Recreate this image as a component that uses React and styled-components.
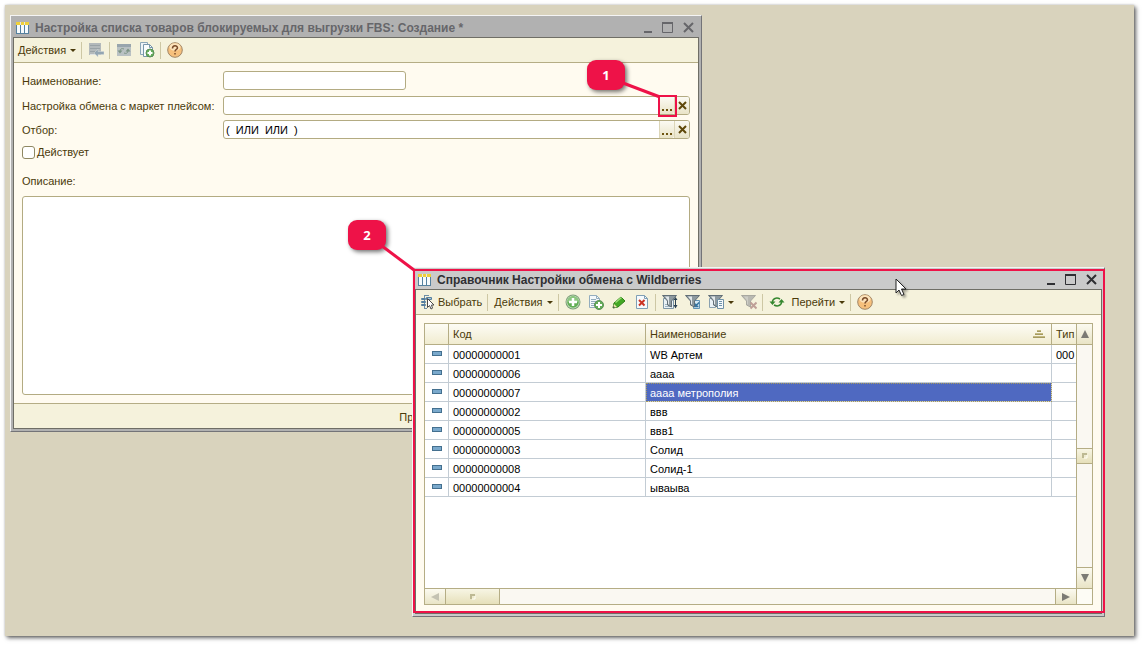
import React, { useState } from "react";
import styled, { createGlobalStyle, css } from "styled-components";

const GlobalStyle = createGlobalStyle`
  * {
    box-sizing: border-box;
  }
  body {
    margin: 0;
    background: #ffffff;
    font-family: "Liberation Sans", Arial, sans-serif;
    font-size: 11px;
    line-height: 14px;
    color: #4a3a0a;
  }
  button, input, textarea {
    font: inherit;
    color: inherit;
  }
`;

const Page = styled.div`
  min-height: 100vh;
  padding: 5px 9px 9px 5px;
  display: flex;
`;

const Desktop = styled.main`
  position: relative;
  flex: 1;
  min-width: 900px;
  min-height: 620px;
  background: #d9d3bd;
  box-shadow: 2px 2px 4px rgba(0, 0, 0, 0.6), 0 0 2px rgba(0, 0, 0, 0.2);
`;

const Window = styled.section`
  position: absolute;
  display: flex;
  flex-direction: column;
  padding: 0 2px 2px;
  border: 1px solid #747478;
  border-top-color: #f4f4f4;
  border-left-color: #f4f4f4;
  background: ${({ $active }) => ($active ? "#cacaca" : "#b1b1b1")};
`;

const FormWindow = styled(Window)`
  top: 10px;
  left: 5px;
  right: 432px;
`;

const ListWindow = styled(Window)`
  top: 262px;
  left: 407px;
  right: 29px;
`;

const TitleBar = styled.header`
  display: flex;
  align-items: center;
  height: 21px;
  padding: 2px 0 0 3px;
  color: ${({ $active }) => ($active ? "#2f2f33" : "#66666a")};
`;

const Title = styled.h1`
  flex: 1;
  margin: 0 0 0 6px;
  font-size: 12px;
  font-weight: 700;
  line-height: 14px;
  white-space: nowrap;
`;

const CaptionButton = styled.button`
  display: flex;
  align-items: center;
  justify-content: center;
  width: 21px;
  height: 16px;
  padding: 0;
  border: 0;
  background: none;
`;

const Client = styled.div`
  display: flex;
  flex-direction: column;
  border: 1px solid #6f6e66;
  background: #fffbf0;
`;

const Toolbar = styled.div`
  display: flex;
  align-items: center;
  gap: 1px;
  height: 25px;
  padding: 0 1px;
  border-bottom: 1px solid #b5ad85;
  background: #f5f2dc;
`;

const ToolButton = styled.button`
  display: flex;
  align-items: center;
  justify-content: center;
  gap: 2px;
  height: 22px;
  min-width: 22px;
  padding: 0 3px;
  border: 0;
  background: none;
  white-space: nowrap;
`;

const Separator = styled.span`
  width: 1px;
  height: 17px;
  margin: 0 2px 0 1px;
  background: #cdc7a4;
`;

const Caret = styled.span`
  margin-left: 2px;
  border: 3px solid transparent;
  border-top-color: #4a3a0a;
  border-bottom: 0;
`;

const Form = styled.form`
  display: flex;
  flex-direction: column;
  padding: 8px;
`;

const FieldRow = styled.div`
  display: grid;
  grid-template-columns: 201px 1fr;
  align-items: center;
  margin-bottom: ${({ $gap }) => $gap || 6}px;
`;

const fieldFrame = css`
  border: 1px solid #b3ab82;
  border-radius: 3px;
  background: #ffffff;
`;

const TextField = styled.input`
  ${fieldFrame}
  width: 183px;
  height: 19px;
  padding: 0 3px;
  color: #000000;
`;

const PickField = styled.div`
  ${fieldFrame}
  display: flex;
  height: 19px;
`;

const PickInput = styled.input`
  flex: 1;
  min-width: 0;
  padding: 0 2px;
  border: 0;
  background: none;
  color: #000000;
  white-space: pre;
`;

const PickButton = styled.button`
  position: relative;
  display: flex;
  align-items: center;
  justify-content: center;
  width: 15px;
  padding: 0;
  border: 0;
  border-left: 1px solid #dcd6b8;
  border-radius: 0 2px 2px 0;
  background: linear-gradient(#fbfaf2, #e9e4c8);
  z-index: ${({ $raised }) => ($raised ? 1 : 0)};
`;

const CheckRow = styled.label`
  display: flex;
  align-items: center;
  gap: 2px;
  height: 14px;
  margin-bottom: 15px;
`;

const CheckBox = styled.input`
  appearance: none;
  ${fieldFrame}
  border-color: #8f8862;
  width: 13px;
  height: 13px;
  margin: 0;
  &:checked {
    background: #8f8862;
  }
`;

const Description = styled.textarea`
  ${fieldFrame}
  display: block;
  width: 100%;
  height: 199px;
  margin-top: 8px;
  padding: 3px;
  resize: none;
`;

const Footer = styled.footer`
  display: flex;
  align-items: flex-end;
  justify-content: flex-end;
  height: 25px;
  padding-right: 247px;
  border-top: 1px solid #b5ad85;
  background: #f5f2dc;
`;

const ListBody = styled.div`
  padding: 8px;
`;

const ListFrame = styled.div`
  display: grid;
  grid-template-columns: 1fr 16px;
  grid-template-rows: minmax(264px, auto) 16px;
  border: 1px solid #b5ad85;
  background: #ffffff;
`;

const Table = styled.table`
  width: 100%;
  table-layout: fixed;
  border-collapse: separate;
  border-spacing: 0;
`;

const Col = styled.col`
  width: ${({ $width }) => ($width ? `${$width}px` : "auto")};
`;

const HeadCell = styled.th`
  height: 21px;
  padding: 0 4px;
  border-right: 1px solid #b5ad85;
  border-bottom: 1px solid #b5ad85;
  background: linear-gradient(#fdfcf5, #f1ecd0);
  font-weight: 400;
  text-align: left;
  white-space: nowrap;
  overflow: hidden;
  &:last-child {
    border-right: 0;
  }
`;

const HeadContent = styled.div`
  display: flex;
  align-items: center;
  justify-content: space-between;
  padding-right: 2px;
`;

const Cell = styled.td`
  height: 19px;
  padding: 1px 4px 0;
  border-right: 1px solid #c3ccd4;
  border-bottom: 1px solid #c3ccd4;
  color: #000000;
  white-space: nowrap;
  overflow: hidden;
  &:last-child {
    border-right: 0;
  }
  ${({ $selected }) =>
    $selected &&
    css`
      background: #4f69c1;
      color: #ffffff;
      outline: 1px dotted #a89a5c;
      outline-offset: -1px;
    `}
`;

const ItemMark = styled.span`
  display: block;
  width: 10px;
  height: 5px;
  margin: 0 0 2px 3px;
  border: 1px solid #44708f;
  background: #7aa9cc;
`;

const VerticalScroll = styled.div`
  display: flex;
  flex-direction: column;
  border-left: 1px solid #b5ad85;
  background: #faf8f2;
`;

const HorizontalScroll = styled.div`
  display: flex;
  border-top: 1px solid #b5ad85;
  background: #faf8f2;
`;

const ScrollCorner = styled.div`
  border-top: 1px solid #b5ad85;
  border-left: 1px solid #b5ad85;
  background: #fdfcf5;
`;

const ScrollButton = styled.button`
  display: flex;
  align-items: center;
  justify-content: center;
  flex: none;
  padding: 0;
  border: 0 solid #b5ad85;
  background: linear-gradient(#fbfaf0, #e9e4c6);
  ${({ $side }) => $side === "up" && "height: 21px; border-bottom-width: 1px;"}
  ${({ $side }) => $side === "down" && "height: 21px; border-top-width: 1px;"}
  ${({ $side }) => $side === "left" && "width: 21px; border-right-width: 1px;"}
  ${({ $side }) => $side === "right" && "width: 21px; border-left-width: 1px;"}
`;

const Track = styled.div`
  display: flex;
  flex: 1;
  flex-direction: ${({ $vertical }) => ($vertical ? "column" : "row")};
`;

const TrackSpace = styled.div`
  flex: ${({ $grow }) => $grow};
`;

const Thumb = styled.div`
  display: flex;
  align-items: center;
  justify-content: center;
  border: 0 solid #b5ad85;
  background: linear-gradient(#f7f5e4, #e6e0ba);
  ${({ $vertical }) =>
    $vertical
      ? "height: 16px; border-width: 1px 0;"
      : "width: 54px; border-right-width: 1px;"}
`;

const Highlight = styled.span`
  position: absolute;
  inset: 1px -1px 3px 0;
  border: 2px solid #ee1248;
  pointer-events: none;
`;

const ButtonHighlight = styled(Highlight)`
  inset: -2px -3px -3px -2px;
`;

const Callout = styled.span`
  position: absolute;
  z-index: 2;
  display: flex;
  align-items: center;
  justify-content: center;
  width: 38px;
  height: 30px;
  border-radius: 9px;
  background: #ee1248;
  box-shadow: 2px 2px 4px rgba(0, 0, 0, 0.55);
  color: #ffffff;
  font: 700 13px/16px "Open Sans", "Noto Sans", sans-serif;
`;

const FirstCallout = styled(Callout)`
  top: -37px;
  left: -73px;
`;

const SecondCallout = styled(Callout)`
  top: -48px;
  left: -65px;
`;

const Leader = styled.svg`
  position: absolute;
  overflow: visible;
  z-index: 3;
  pointer-events: none;
`;

const FirstLeader = styled(Leader)`
  top: -14px;
  left: -37px;
`;

const SecondLeader = styled(Leader)`
  top: -22px;
  left: -31px;
`;

const Pointer = styled.svg`
  position: absolute;
  top: 10px;
  right: 196px;
  filter: drop-shadow(2px 2px 1px rgba(0, 0, 0, 0.35));
`;

const Icon = ({ children, width = 16, height = 16 }) => (
  <svg width={width} height={height} viewBox={`0 0 ${width} ${height}`} fill="none" aria-hidden="true">
    {children}
  </svg>
);

const TableIcon = () => (
  <Icon width={13} height={12}>
    <path d="M0 2h13v10H0z" fill="#55819f" />
    <path d="M1 3h3v8H1zM5 3h3v8H5zM9 3h3v8H9z" fill="#f7fbfd" />
    <path d="M0 0h4v3H0zM5 0h3v3H5zM9 0h4v3H9z" fill="#efd03a" />
    <path d="M4 0h1v3H4zM8 0h1v3H8z" fill="#e8e8e0" />
  </Icon>
);

const SaveIcon = () => (
  <Icon>
    <path d="M1 1h12v12H1z" fill="#b3b9bb" />
    <path d="M2 3.500h10M2 6.500h10M2 9.500h5" stroke="#9aa3a7" />
    <path d="M2 12.500h6" stroke="#dfe3e2" />
    <path d="M6 11l4-4v2.500h6v3h-6V15z" fill="#93a5b2" stroke="#d5dad9" strokeWidth=".5" />
  </Icon>
);

const RereadIcon = () => (
  <Icon>
    <path d="M1 2h14v12H1z" fill="#b9c1c3" />
    <path d="M1 2h14v3H1z" fill="#98a5ad" />
    <path d="M4 9c0-2 2-3 4-2M12 9c0 2-2 3-4 2" stroke="#7c9484" />
    <path d="M1.500 8.500h5L4 11.500zM9.500 9.500h5L12 6.500z" fill="#7c9484" />
  </Icon>
);

const PlusBadge = ({ x, y, r }) => (
  <g>
    <circle cx={x} cy={y} r={r} fill="#64ad58" stroke="#5a8f58" />
    <path d={`M${x - r + 1.5} ${y}h${2 * r - 3}M${x} ${y - r + 1.5}v${2 * r - 3}`} stroke="#fff" strokeWidth="2" />
  </g>
);

const CopyDocsIcon = () => (
  <Icon>
    <path d="M1.500.500h7v12h-7z" fill="#eef4f7" stroke="#8ba6b7" />
    <path d="M4.500 2.500h6l3 3v9h-9z" fill="#f8fbfc" stroke="#7896aa" />
    <path d="M10.500 2.500v3h3" stroke="#7896aa" />
    <PlusBadge x={11} y={11} r={4} />
  </Icon>
);

const AddIcon = () => (
  <Icon>
    <circle cx="8" cy="8" r="7.500" fill="#7d9f79" />
    <circle cx="8" cy="8" r="6.500" fill="#cde5c6" />
    <circle cx="8" cy="8" r="5.800" fill="#62ae55" />
    <path d="M2.200 8a5.800 5.800 0 0 1 11.600 0z" fill="#8dc781" />
    <path d="M4 8h8M8 4v8" stroke="#fff" strokeWidth="2.500" />
  </Icon>
);

const AddCopyIcon = () => (
  <Icon>
    <path d="M1.500 1.500h7l3 3v9h-10z" fill="#f4f9fb" stroke="#93adbe" />
    <path d="M8.500 1.500v3h3M3 5.500h5M3 7.500h5M3 9.500h4M3 11.500h3" stroke="#93adbe" />
    <PlusBadge x={11} y={11} r={4.5} />
  </Icon>
);

const EditIcon = () => (
  <Icon>
    <path d="M2 14l1-5 7-6 4 4-7 6z" fill="#43a824" stroke="#2f8019" />
    <path d="M4.500 8.500l6-5" stroke="#9bdc78" strokeWidth="1.500" />
    <path d="M2 14l1-4 3 3z" fill="#f3e6b4" />
    <path d="M2 14l.500-2 1.500 1.500z" fill="#333" />
  </Icon>
);

const DeleteIcon = () => (
  <Icon>
    <path d="M2.500 1.500h8l3 3v10h-11z" fill="#f6fafc" stroke="#7f9fb5" />
    <path d="M10.500 1.500v3h3" stroke="#7f9fb5" />
    <path d="M5 6l5.500 5.500M10.500 6L5 11.500" stroke="#cc3322" strokeWidth="2" />
  </Icon>
);

const Funnel = ({ muted }) => (
  <g>
    <path
      d="M.500 1.500h14L9.500 7v6l-4-2V7z"
      fill={muted ? "#b9b9b2" : "#8d999f"}
      stroke={muted ? "#a8a8a0" : "#626f77"}
    />
    <path d="M3 2.500h4v8L6 10V6.500z" fill={muted ? "#cdcdc6" : "#e3e9ec"} />
  </g>
);

const FilterSortIcon = () => (
  <Icon>
    <path d="M1.500 4.500h10v10h-10z" fill="#eaf2f6" stroke="#7f97a6" />
    <path d="M3 12.500h7M3 10.500h3" stroke="#9db3c1" />
    <Funnel />
    <path d="M13.500 4v9" stroke="#2c4254" />
    <path d="M11.500 6l2-3 2 3zM11.500 11l2 3.500 2-3.500z" fill="#2c4254" />
  </Icon>
);

const FilterValueIcon = () => (
  <Icon>
    <path d="M8.500 6.500h6v8h-6z" fill="#d6eaf6" stroke="#5f93b6" />
    <Funnel />
    <path d="M10.500 12.500l3.500-4M10.500 9.500v3h3" stroke="#3674a0" strokeWidth="1.500" />
  </Icon>
);

const FilterListIcon = () => (
  <Icon>
    <path d="M1.500 4.500h6v9h-6z" fill="#eaf2f6" stroke="#8aa1b0" />
    <Funnel />
    <path d="M9.500 5.500h6v9h-6z" fill="#f5f9fb" stroke="#6f90a6" />
    <path d="M11 7.500h3M11 9.500h3M11 11.500h3" stroke="#6f93ab" />
  </Icon>
);

const FilterOffIcon = () => (
  <Icon>
    <Funnel muted />
    <path d="M9.500 8.500l6 6M15.500 8.500l-6 6" stroke="#bf9f97" strokeWidth="2" />
  </Icon>
);

const RefreshIcon = () => (
  <Icon>
    <path d="M3.500 8c0-3.500 4-5 7.500-3M12.500 8c0 3.500-4 5-7.500 3" stroke="#35872f" strokeWidth="1.500" />
    <path d="M.500 7.500h6l-3 3.500zM9.500 8.500h6l-3-3.500z" fill="#35872f" />
  </Icon>
);

const HelpIcon = () => (
  <Icon>
    <circle cx="8" cy="8" r="7.300" fill="#f6c07c" stroke="#a08565" />
    <ellipse cx="8" cy="5" rx="5.500" ry="3.800" fill="#fce3bb" />
    <path d="M5.500 6.500C5.500 3 10.500 3 10.500 6c0 1.500-2.500 1.500-2.500 3.500M8 11v1.500" stroke="#7a4c2a" strokeWidth="1.500" />
  </Icon>
);

const SelectIcon = () => (
  <Icon>
    <path d="M4.500 1.500v13M4 1.500h5M4 14.500h3" stroke="#6d8ea6" />
    <path d="M1.500 4.500h4v1h-4zM1.500 7.500h4v1h-4zM1.500 10.500h4v1h-4zM6.500 3.500h5v2h-5z" fill="#a8c8dc" stroke="#557f9e" />
    <path d="M7.500 4.500v9l2-2 1.500 3.500 1.500-.800L11.500 11H14z" fill="#fff" stroke="#4a4a4a" />
  </Icon>
);

const SortIcon = () => (
  <Icon width={12} height={8}>
    <path d="M4 0h4v2H4zM2 3h8v2H2zM0 6h12v2H0z" fill="#c3b980" />
    <path d="M4 1.500h4M2 4.500h8M0 7.500h12" stroke="#a59a60" />
  </Icon>
);

const CaptionButtons = () => (
  <>
    <CaptionButton type="button" aria-label="Свернуть">
      <Icon width={11} height={11}>
        <path d="M3 9h8v2H3z" fill="currentColor" />
      </Icon>
    </CaptionButton>
    <CaptionButton type="button" aria-label="Развернуть">
      <Icon width={11} height={11}>
        <path d="M.500 1h10v9.500H.500z" stroke="currentColor" />
        <path d="M0 1h11" stroke="currentColor" strokeWidth="2" />
      </Icon>
    </CaptionButton>
    <CaptionButton type="button" aria-label="Закрыть">
      <Icon width={11} height={11}>
        <path d="M1 1l9 9M10 1l-9 9" stroke="currentColor" strokeWidth="2" />
      </Icon>
    </CaptionButton>
  </>
);

const ARROWS = {
  up: "M4 0l4 8H0z",
  down: "M0 0h8L4 8z",
  left: "M8 0v8L0 4z",
  right: "M0 0v8l8-4z",
};

const ScrollArrow = ({ side, label, muted }) => (
  <ScrollButton type="button" $side={side} aria-label={label}>
    <Icon width={8} height={8}>
      <path d={ARROWS[side]} fill={muted ? "#c4c2b2" : "#7b7a74"} />
    </Icon>
  </ScrollButton>
);

const Grip = () => (
  <Icon width={6} height={6}>
    <path d="M1 5V1h4" stroke="#bdb993" strokeWidth="2" />
    <path d="M5 2v3H2" stroke="#fffef5" />
  </Icon>
);

const PickerField = ({ id, value, highlighted }) => (
  <PickField>
    <PickInput id={id} defaultValue={value} />
    <PickButton type="button" aria-label="Выбрать значение" $raised={highlighted}>
      <Icon width={11} height={11}>
        <path d="M0 9h2v2H0zM4 9h2v2H4zM8 9h2v2H8z" fill="#6d5410" />
      </Icon>
      {highlighted && (
        <>
          <ButtonHighlight />
          <FirstCallout>1</FirstCallout>
          <FirstLeader width="38" height="16">
            <path d="M0 0l37 14" stroke="#ee1248" strokeWidth="3" />
          </FirstLeader>
        </>
      )}
    </PickButton>
    <PickButton type="button" aria-label="Очистить">
      <Icon width={9} height={9}>
        <path d="M1 1l7 7M8 1L1 8" stroke="#5f480a" strokeWidth="2" />
      </Icon>
    </PickButton>
  </PickField>
);

const ROWS = [
  { code: "00000000001", name: "WB Артем", type: "000" },
  { code: "00000000006", name: "аааа" },
  { code: "00000000007", name: "аааа метрополия" },
  { code: "00000000002", name: "ввв" },
  { code: "00000000005", name: "ввв1" },
  { code: "00000000003", name: "Солид" },
  { code: "00000000008", name: "Солид-1" },
  { code: "00000000004", name: "ываыва" },
];

const BlockedGoodsForm = () => (
  <FormWindow>
    <TitleBar>
      <TableIcon />
      <Title>Настройка списка товаров блокируемых для выгрузки FBS: Создание *</Title>
      <CaptionButtons />
    </TitleBar>
    <Client>
      <Toolbar>
        <ToolButton>Действия <Caret /></ToolButton>
        <Separator />
        <ToolButton aria-label="Записать"><SaveIcon /></ToolButton>
        <Separator />
        <ToolButton aria-label="Перечитать"><RereadIcon /></ToolButton>
        <ToolButton aria-label="Скопировать"><CopyDocsIcon /></ToolButton>
        <Separator />
        <ToolButton aria-label="Справка"><HelpIcon /></ToolButton>
      </Toolbar>
      <Form>
        <FieldRow>
          <label htmlFor="name">Наименование:</label>
          <TextField id="name" />
        </FieldRow>
        <FieldRow $gap={5}>
          <label htmlFor="exchange">Настройка обмена с маркет плейсом:</label>
          <PickerField id="exchange" highlighted />
        </FieldRow>
        <FieldRow>
          <label htmlFor="filter">Отбор:</label>
          <PickerField id="filter" value="(  ИЛИ  ИЛИ  )" />
        </FieldRow>
        <CheckRow>
          <CheckBox type="checkbox" />
          Действует
        </CheckRow>
        <label htmlFor="description">Описание:</label>
        <Description id="description" />
      </Form>
      <Footer>
        <ToolButton>Провести</ToolButton>
      </Footer>
    </Client>
  </FormWindow>
);

const ExchangeSettingsList = () => {
  const [selected, setSelected] = useState("00000000007");

  return (
    <ListWindow $active>
      <TitleBar $active>
        <TableIcon />
        <Title>Справочник Настройки обмена с Wildberries</Title>
        <CaptionButtons />
      </TitleBar>
      <Client>
        <Toolbar>
          <ToolButton><SelectIcon />Выбрать</ToolButton>
          <Separator />
          <ToolButton>Действия <Caret /></ToolButton>
          <Separator />
          <ToolButton aria-label="Добавить"><AddIcon /></ToolButton>
          <ToolButton aria-label="Добавить копированием"><AddCopyIcon /></ToolButton>
          <ToolButton aria-label="Изменить"><EditIcon /></ToolButton>
          <ToolButton aria-label="Удалить"><DeleteIcon /></ToolButton>
          <Separator />
          <ToolButton aria-label="Отбор и сортировка"><FilterSortIcon /></ToolButton>
          <ToolButton aria-label="Отбор по значению"><FilterValueIcon /></ToolButton>
          <ToolButton aria-label="История отборов"><FilterListIcon /><Caret /></ToolButton>
          <ToolButton aria-label="Отключить отбор"><FilterOffIcon /></ToolButton>
          <Separator />
          <ToolButton aria-label="Обновить"><RefreshIcon /></ToolButton>
          <ToolButton>Перейти <Caret /></ToolButton>
          <Separator />
          <ToolButton aria-label="Справка"><HelpIcon /></ToolButton>
        </Toolbar>
        <ListBody>
          <ListFrame>
            <div>
              <Table>
                <colgroup>
                  <Col $width={24} />
                  <Col $width={197} />
                  <Col />
                  <Col $width={24} />
                </colgroup>
                <thead>
                  <tr>
                    <HeadCell aria-label="Вид" />
                    <HeadCell>Код</HeadCell>
                    <HeadCell>
                      <HeadContent>Наименование <SortIcon /></HeadContent>
                    </HeadCell>
                    <HeadCell>Тип</HeadCell>
                  </tr>
                </thead>
                <tbody>
                  {ROWS.map((row) => (
                    <tr key={row.code} onClick={() => setSelected(row.code)}>
                      <Cell><ItemMark /></Cell>
                      <Cell>{row.code}</Cell>
                      <Cell $selected={row.code === selected}>{row.name}</Cell>
                      <Cell>{row.type}</Cell>
                    </tr>
                  ))}
                </tbody>
              </Table>
            </div>
            <VerticalScroll>
              <ScrollArrow side="up" label="Вверх" />
              <Track $vertical>
                <TrackSpace $grow={1} />
                <Thumb $vertical><Grip /></Thumb>
                <TrackSpace $grow={1} />
              </Track>
              <ScrollArrow side="down" label="Вниз" />
            </VerticalScroll>
            <HorizontalScroll>
              <ScrollArrow side="left" label="Влево" muted />
              <Track>
                <Thumb><Grip /></Thumb>
              </Track>
              <ScrollArrow side="right" label="Вправо" />
            </HorizontalScroll>
            <ScrollCorner />
          </ListFrame>
        </ListBody>
      </Client>
      <Highlight />
      <SecondCallout>2</SecondCallout>
      <SecondLeader width="34" height="26">
        <path d="M0 0l32 24" stroke="#ee1248" strokeWidth="3" />
      </SecondLeader>
      <Pointer width="13" height="19" viewBox="0 0 13 19">
        <path d="M1 1v14l3-3 2.500 5.500 2.500-1L6.500 11H11z" fill="#fff" stroke="#222" />
      </Pointer>
    </ListWindow>
  );
};

const App = () => (
  <>
    <GlobalStyle />
    <Page>
      <Desktop>
        <BlockedGoodsForm />
        <ExchangeSettingsList />
      </Desktop>
    </Page>
  </>
);

export default App;
